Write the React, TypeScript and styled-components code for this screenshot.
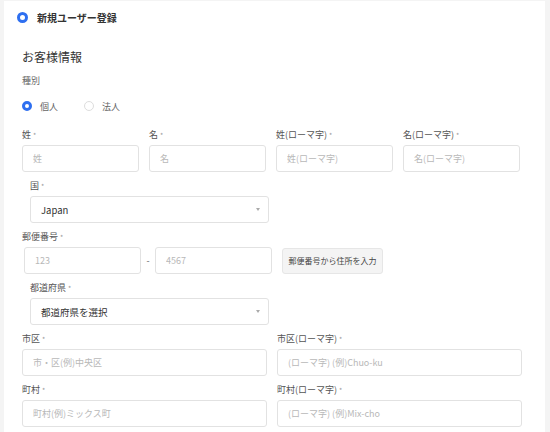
import React from "react";
import styled, { createGlobalStyle } from "styled-components";

const GlobalStyle = createGlobalStyle`
  html, body {
    margin: 0;
    padding: 0;
    background: #f4f4f4;
    font-family: "Noto Sans CJK JP", "Noto Sans", "Liberation Sans", sans-serif;
    -webkit-font-smoothing: antialiased;
  }
  * { box-sizing: border-box; }
`;

type TField = {
  label: string;
  placeholder: string;
};

const nameFields: TField[] = [
  { label: "姓", placeholder: "姓" },
  { label: "名", placeholder: "名" },
  { label: "姓(ローマ字)", placeholder: "姓(ローマ字)" },
  { label: "名(ローマ字)", placeholder: "名(ローマ字)" },
];

const cityFields: TField[] = [
  { label: "市区", placeholder: "市・区(例)中央区" },
  { label: "市区(ローマ字)", placeholder: "(ローマ字) (例)Chuo-ku" },
  { label: "町村", placeholder: "町村(例)ミックス町" },
  { label: "町村(ローマ字)", placeholder: "(ローマ字) (例)Mix-cho" },
];

const Label = ({ text }: { text: string }) => (
  <FieldLabel>
    {text}
    <Star>*</Star>
  </FieldLabel>
);

const App = (): JSX.Element => {
  return (
    <>
      <GlobalStyle />
      <Page>
        <Card>
          {/* header */}
          <Header>
            <BigRadio />
            <HeaderText>新規ユーザー登録</HeaderText>
          </Header>

          <Body>
            <Title>お客様情報</Title>
            <SmallLabel>種別</SmallLabel>

            <RadioRow>
              <RadioItem>
                <Radio checked />
                <span>個人</span>
              </RadioItem>
              <RadioItem>
                <Radio />
                <span>法人</span>
              </RadioItem>
            </RadioRow>

            {/* names */}
            <NameGrid>
              {nameFields.map((f) => (
                <Field key={f.label}>
                  <Label text={f.label} />
                  <Input placeholder={f.placeholder} />
                </Field>
              ))}
            </NameGrid>

            <Indented indent={8}>
              <Field>
                <Label text="国" />
                <Select>
                  <span>Japan</span>
                  <Caret />
                </Select>
              </Field>
            </Indented>

            {/* postal code */}
            <Block>
              <Field>
                <Label text="郵便番号" />
                <PostalRow>
                  <PostalInput placeholder="123" />
                  <Dash>-</Dash>
                  <PostalInput placeholder="4567" />
                  <LookupButton>郵便番号から住所を入力</LookupButton>
                </PostalRow>
              </Field>
            </Block>

            <Indented indent={8}>
              <Field>
                <Label text="都道府県" />
                <Select>
                  <span>都道府県を選択</span>
                  <Caret />
                </Select>
              </Field>
            </Indented>

            <CityGrid>
              {cityFields.map((f) => (
                <Field key={f.label}>
                  <Label text={f.label} />
                  <Input placeholder={f.placeholder} />
                </Field>
              ))}
            </CityGrid>
          </Body>
        </Card>
      </Page>
    </>
  );
};

const Page = styled.div`
  width: 550px;
  height: 432px;
  overflow: hidden;
  padding: 1px 5px 0 4px;
  background: #f4f4f4;
`;

const Card = styled.div`
  background: #fff;
  height: 100%;
`;

const Header = styled.div`
  height: 32px;
  display: flex;
  align-items: center;
  gap: 9px;
  padding-left: 13px;
`;

const BigRadio = styled.div`
  width: 11px;
  height: 11px;
  border-radius: 50%;
  border: 3px solid #2e6ff0;
  background: #fff;
`;

const HeaderText = styled.div`
  font-size: 10px;
  font-weight: 700;
  color: #333;
`;

const Body = styled.div`
  padding: 0 20px 0 18px;
`;

const Title = styled.div`
  margin-top: 16px;
  font-size: 12px;
  line-height: 16px;
  color: #333;
`;

const SmallLabel = styled.div`
  margin-top: 10px;
  font-size: 9px;
  line-height: 12px;
  color: #666;
`;

const RadioRow = styled.div`
  margin-top: 11px;
  height: 16px;
  display: flex;
  align-items: center;
  gap: 26px;
`;

const RadioItem = styled.label`
  display: flex;
  align-items: center;
  gap: 8px;
  font-size: 9px;
  color: #666;
`;

const Radio = styled.span<{ checked?: boolean }>`
  width: 10px;
  height: 10px;
  border-radius: 50%;
  background: #fff;
  border: ${(p) => (p.checked ? "3px solid #2e6ff0" : "1px solid #ddd")};
`;

const Field = styled.div`
  display: flex;
  flex-direction: column;
  gap: 4px;
`;

const FieldLabel = styled.div`
  font-size: 9px;
  line-height: 12px;
  color: #555;
`;

const Star = styled.span`
  margin-left: 2px;
  font-size: 7px;
  color: #999;
  vertical-align: top;
`;

const Input = styled.input`
  height: 27px;
  width: 100%;
  border: 1px solid #e2e2e2;
  border-radius: 3px;
  padding: 0 10px;
  font-family: inherit;
  font-size: 9px;
  color: #333;
  outline: none;

  &::placeholder {
    color: #b8b8b8;
  }
`;

const NameGrid = styled.div`
  margin-top: 15px;
  display: grid;
  grid-template-columns: repeat(4, 117px);
  column-gap: 10px;
`;

const Indented = styled.div<{ indent: number }>`
  margin-top: 8px;
  padding-left: ${(p) => p.indent}px;
  width: ${(p) => p.indent + 239}px;
`;

const Block = styled.div`
  margin-top: 8px;
`;

const Select = styled.div`
  height: 27px;
  border: 1px solid #e2e2e2;
  border-radius: 3px;
  padding: 0 8px 0 10px;
  display: flex;
  align-items: center;
  justify-content: space-between;
  font-size: 9.5px;
  color: #333;
`;

const Caret = styled.span`
  width: 0;
  height: 0;
  border-left: 2.5px solid transparent;
  border-right: 2.5px solid transparent;
  border-top: 3px solid #aaa;
`;

const PostalRow = styled.div`
  display: flex;
  align-items: center;
  padding-left: 2px;
`;

const PostalInput = styled(Input)`
  width: 117px;
`;

const Dash = styled.span`
  width: 14px;
  text-align: center;
  font-size: 9px;
  color: #666;
`;

const LookupButton = styled.button`
  margin-left: 10px;
  height: 26px;
  width: 101px;
  padding: 0;
  border: 1px solid #e6e6e6;
  border-radius: 3px;
  background: #f4f4f4;
  font-family: inherit;
  font-size: 8px;
  color: #444;
  white-space: nowrap;
`;

const CityGrid = styled.div`
  margin-top: 8px;
  display: grid;
  grid-template-columns: 245px 245px;
  column-gap: 10px;
  row-gap: 8px;
`;

export default App;
